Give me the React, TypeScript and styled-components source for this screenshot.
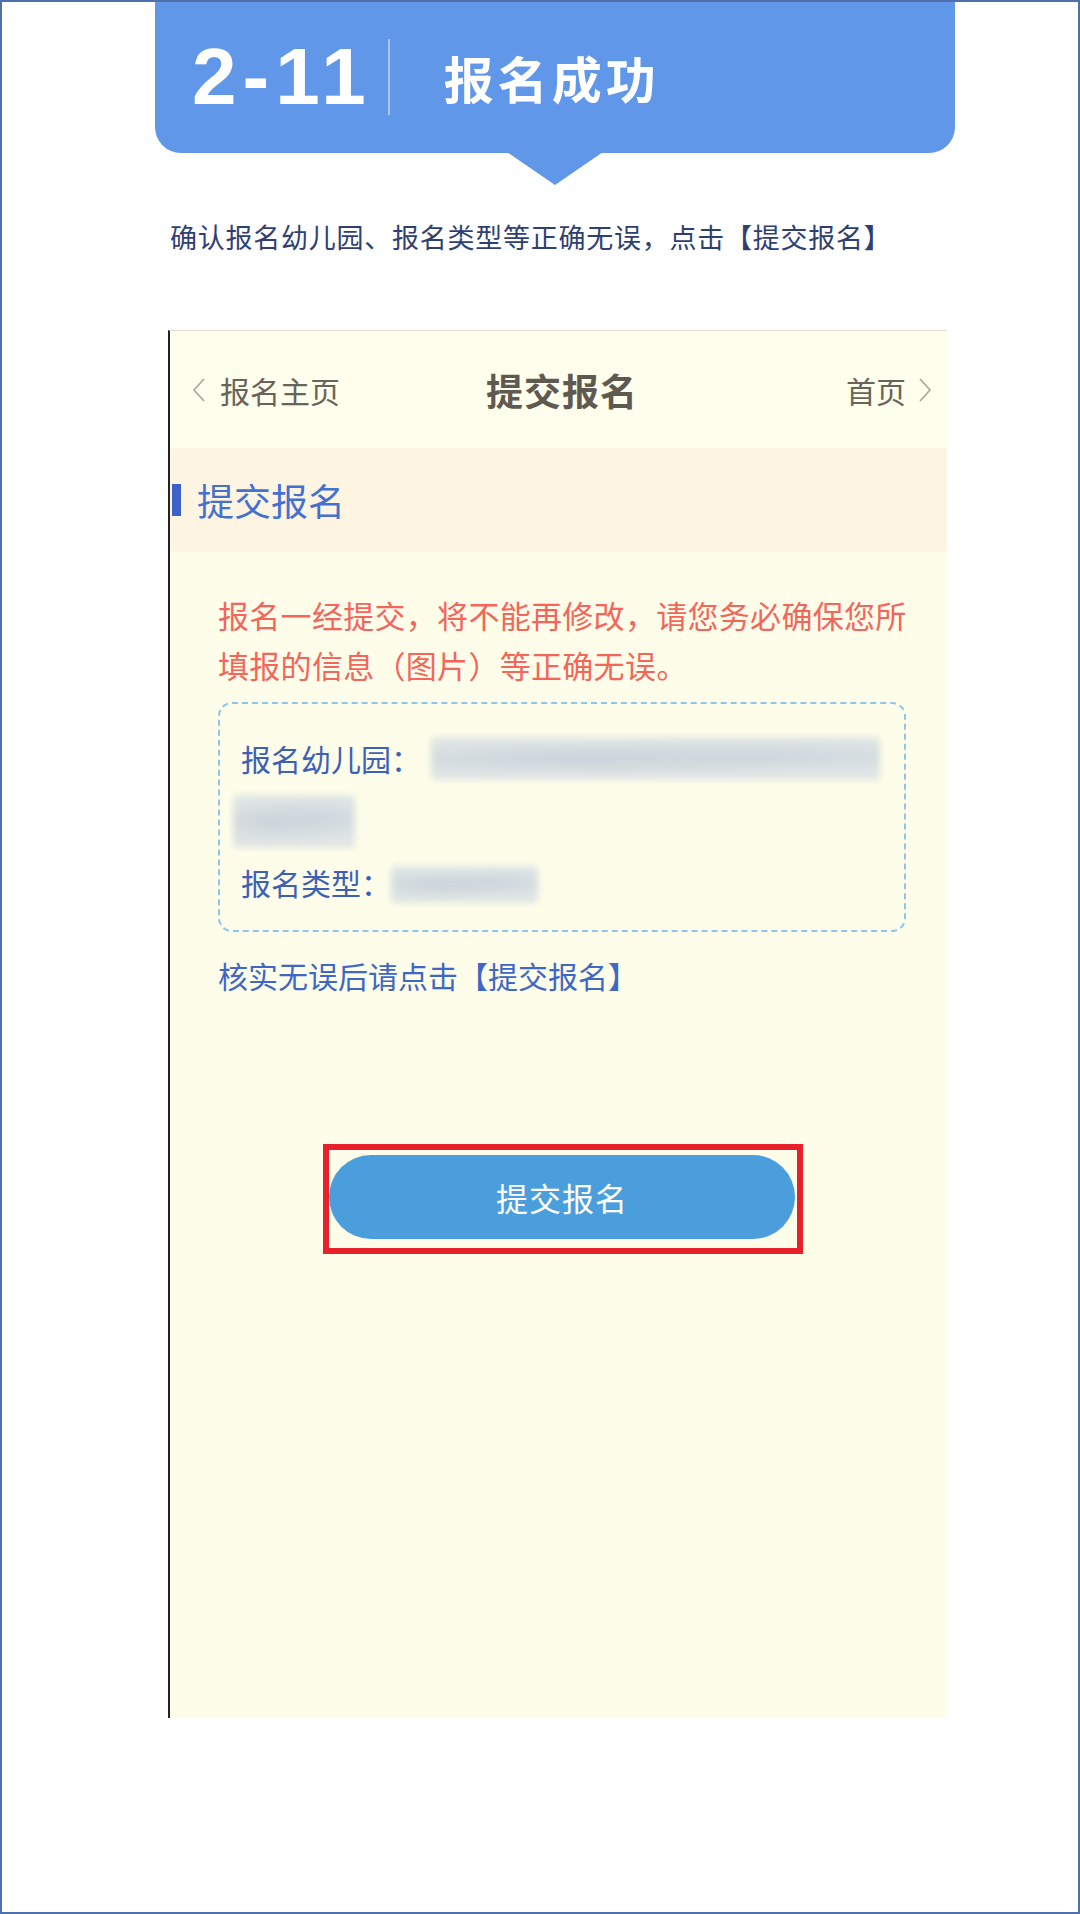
import React from "react";
import styled, { createGlobalStyle } from "styled-components";

const GlobalStyle = createGlobalStyle`
  html, body { margin: 0; padding: 0; background: #ffffff; }
  body { font-family: "Noto Sans CJK SC", "Noto Sans", sans-serif; }
  * { box-sizing: border-box; }
`;

const CJK = `"Noto Sans CJK SC", "Noto Sans", sans-serif`;

const Frame = styled.div`
  width: 1080px;
  height: 1914px;
  border: 2px solid #4f70ad;
  background: #ffffff;
  overflow: hidden;
`;

const Banner = styled.div`
  position: relative;
  margin-left: 153px;
  width: 800px;
  height: 151px;
  background: #6197e8;
  border-radius: 0 0 26px 26px;
  display: flex;
  align-items: center;
  padding: 0 0 2px 37px;

  &::after {
    content: "";
    position: absolute;
    left: 352px;
    top: 150px;
    width: 0;
    height: 0;
    border-left: 48px solid transparent;
    border-right: 48px solid transparent;
    border-top: 33px solid #6197e8;
  }
`;

const StepNo = styled.div`
  font-family: "Liberation Sans", Arial, sans-serif;
  font-weight: 700;
  font-size: 80px;
  line-height: 1;
  letter-spacing: 6px;
  color: #ffffff;
`;

const Divider = styled.div`
  width: 2px;
  height: 76px;
  margin: 0 54px 0 16px;
  background: rgba(255, 255, 255, 0.45);
`;

const BannerTitle = styled.div`
  font-family: ${CJK};
  font-weight: 700;
  font-size: 50px;
  line-height: 1;
  letter-spacing: 4px;
  color: #ffffff;
`;

const Lead = styled.p`
  margin: 64px 0 0 168px;
  font-family: ${CJK};
  font-size: 27px;
  line-height: 40px;
  letter-spacing: 0.75px;
  color: #2f3f72;
`;

const Phone = styled.div`
  margin: 73px 0 0 166px;
  width: 779px;
  height: 1388px;
  background: #fdfde9;
  border-left: 2px solid #222222;
  border-top: 1px solid #e6dad2;
  display: flex;
  flex-direction: column;
`;

const NavBar = styled.div`
  height: 117px;
  display: grid;
  grid-template-columns: 1fr auto 1fr;
  align-items: center;
  padding: 0 15px 0 22px;
  background: #fefeec;
`;

const NavSide = styled.div<{ $right?: boolean }>`
  display: flex;
  align-items: center;
  justify-content: ${(p) => (p.$right ? "flex-end" : "flex-start")};
  gap: ${(p) => (p.$right ? "12px" : "14px")};
  font-family: ${CJK};
  font-size: 30px;
  line-height: 40px;
  color: #6a635a;
`;

const NavTitle = styled.div`
  font-family: ${CJK};
  font-weight: 700;
  font-size: 37px;
  line-height: 44px;
  letter-spacing: 1px;
  color: #5e5951;
`;

const SectionHead = styled.div`
  height: 104px;
  background: #fdf4e2;
  display: flex;
  align-items: center;
  gap: 16px;
  padding-left: 2px;
`;

const SectionBar = styled.div`
  width: 9px;
  height: 32px;
  background: #3a62c9;
`;

const SectionTitle = styled.div`
  font-family: ${CJK};
  font-size: 37px;
  line-height: 44px;
  color: #4470d0;
`;

const Body = styled.div`
  padding: 38px 0 0 48px;
  display: flex;
  flex-direction: column;
  align-items: flex-start;
`;

const Warning = styled.p`
  margin: 0;
  width: 700px;
  font-family: ${CJK};
  font-size: 31px;
  line-height: 50px;
  letter-spacing: 0.3px;
  color: #f4665b;
`;

const InfoBox = styled.div`
  margin-top: 12px;
  width: 688px;
  height: 230px;
  border: 2px dashed #90c5ea;
  border-radius: 14px;
  padding: 23px 16px 17px 13px;
  display: flex;
  flex-direction: column;
`;

const InfoRow = styled.div`
  height: 62px;
  display: flex;
  align-items: center;
`;

const InfoLabel = styled.span`
  margin-left: 8px;
  font-family: ${CJK};
  font-size: 30px;
  line-height: 40px;
  color: #3d5fb8;
`;

const Blur = styled.div<{ $w: number; $h: number; $ml: number; $dy?: number }>`
  width: ${(p) => p.$w}px;
  height: ${(p) => p.$h}px;
  margin-left: ${(p) => p.$ml}px;
  margin-top: ${(p) => (p.$dy ?? 0) * 2}px;
  background:
    radial-gradient(ellipse at 30% 50%, rgba(200, 210, 218, 0.9), transparent 60%),
    radial-gradient(ellipse at 75% 45%, rgba(205, 214, 222, 0.9), transparent 55%),
    #e1e6e5;
  filter: blur(3px);
  border-radius: 4px;
`;

const Confirm = styled.p`
  margin: 18px 0 0;
  font-family: ${CJK};
  font-size: 30px;
  line-height: 50px;
  color: #3f68c6;
`;

const Highlight = styled.div`
  margin: 144px 0 0 105px;
  border: 6px solid #e8202a;
  padding: 5px 2px 9px 0;
`;

const SubmitButton = styled.button`
  display: flex;
  align-items: center;
  justify-content: center;
  width: 466px;
  height: 84px;
  border: none;
  border-radius: 42px;
  background: #4b9edc;
  font-family: ${CJK};
  font-size: 32px;
  line-height: 40px;
  letter-spacing: 1px;
  color: #ffffff;
  cursor: pointer;
`;

const Chevron = ({ dir }: { dir: "left" | "right" }) => (
  <svg width="14" height="26" viewBox="0 0 14 26" fill="none">
    <polyline
      points={dir === "left" ? "12,2 2,13 12,24" : "2,2 12,13 2,24"}
      stroke="#a8a49c"
      strokeWidth="1.6"
      fill="none"
    />
  </svg>
);

export default function App() {
  return (
    <>
      <GlobalStyle />
      <Frame>
        <Banner>
          <StepNo>2-11</StepNo>
          <Divider />
          <BannerTitle>报名成功</BannerTitle>
        </Banner>
        <Lead>确认报名幼儿园、报名类型等正确无误，点击【提交报名】</Lead>
        <Phone>
          <NavBar>
            <NavSide>
              <Chevron dir="left" />
              <span>报名主页</span>
            </NavSide>
            <NavTitle>提交报名</NavTitle>
            <NavSide $right>
              <span>首页</span>
              <Chevron dir="right" />
            </NavSide>
          </NavBar>
          <SectionHead>
            <SectionBar />
            <SectionTitle>提交报名</SectionTitle>
          </SectionHead>
          <Body>
            <Warning>
              报名一经提交，将不能再修改，请您务必确保您所填报的信息（图片）等正确无误。
            </Warning>
            <InfoBox>
              <InfoRow>
                <InfoLabel>报名幼儿园：</InfoLabel>
                <Blur $w={449} $h={43} $ml={10} />
              </InfoRow>
              <InfoRow>
                <Blur $w={122} $h={53} $ml={0} $dy={1} />
              </InfoRow>
              <InfoRow>
                <InfoLabel>报名类型：</InfoLabel>
                <Blur $w={147} $h={37} $ml={0} $dy={2} />
              </InfoRow>
            </InfoBox>
            <Confirm>核实无误后请点击【提交报名】</Confirm>
            <Highlight>
              <SubmitButton>提交报名</SubmitButton>
            </Highlight>
          </Body>
        </Phone>
      </Frame>
    </>
  );
}
